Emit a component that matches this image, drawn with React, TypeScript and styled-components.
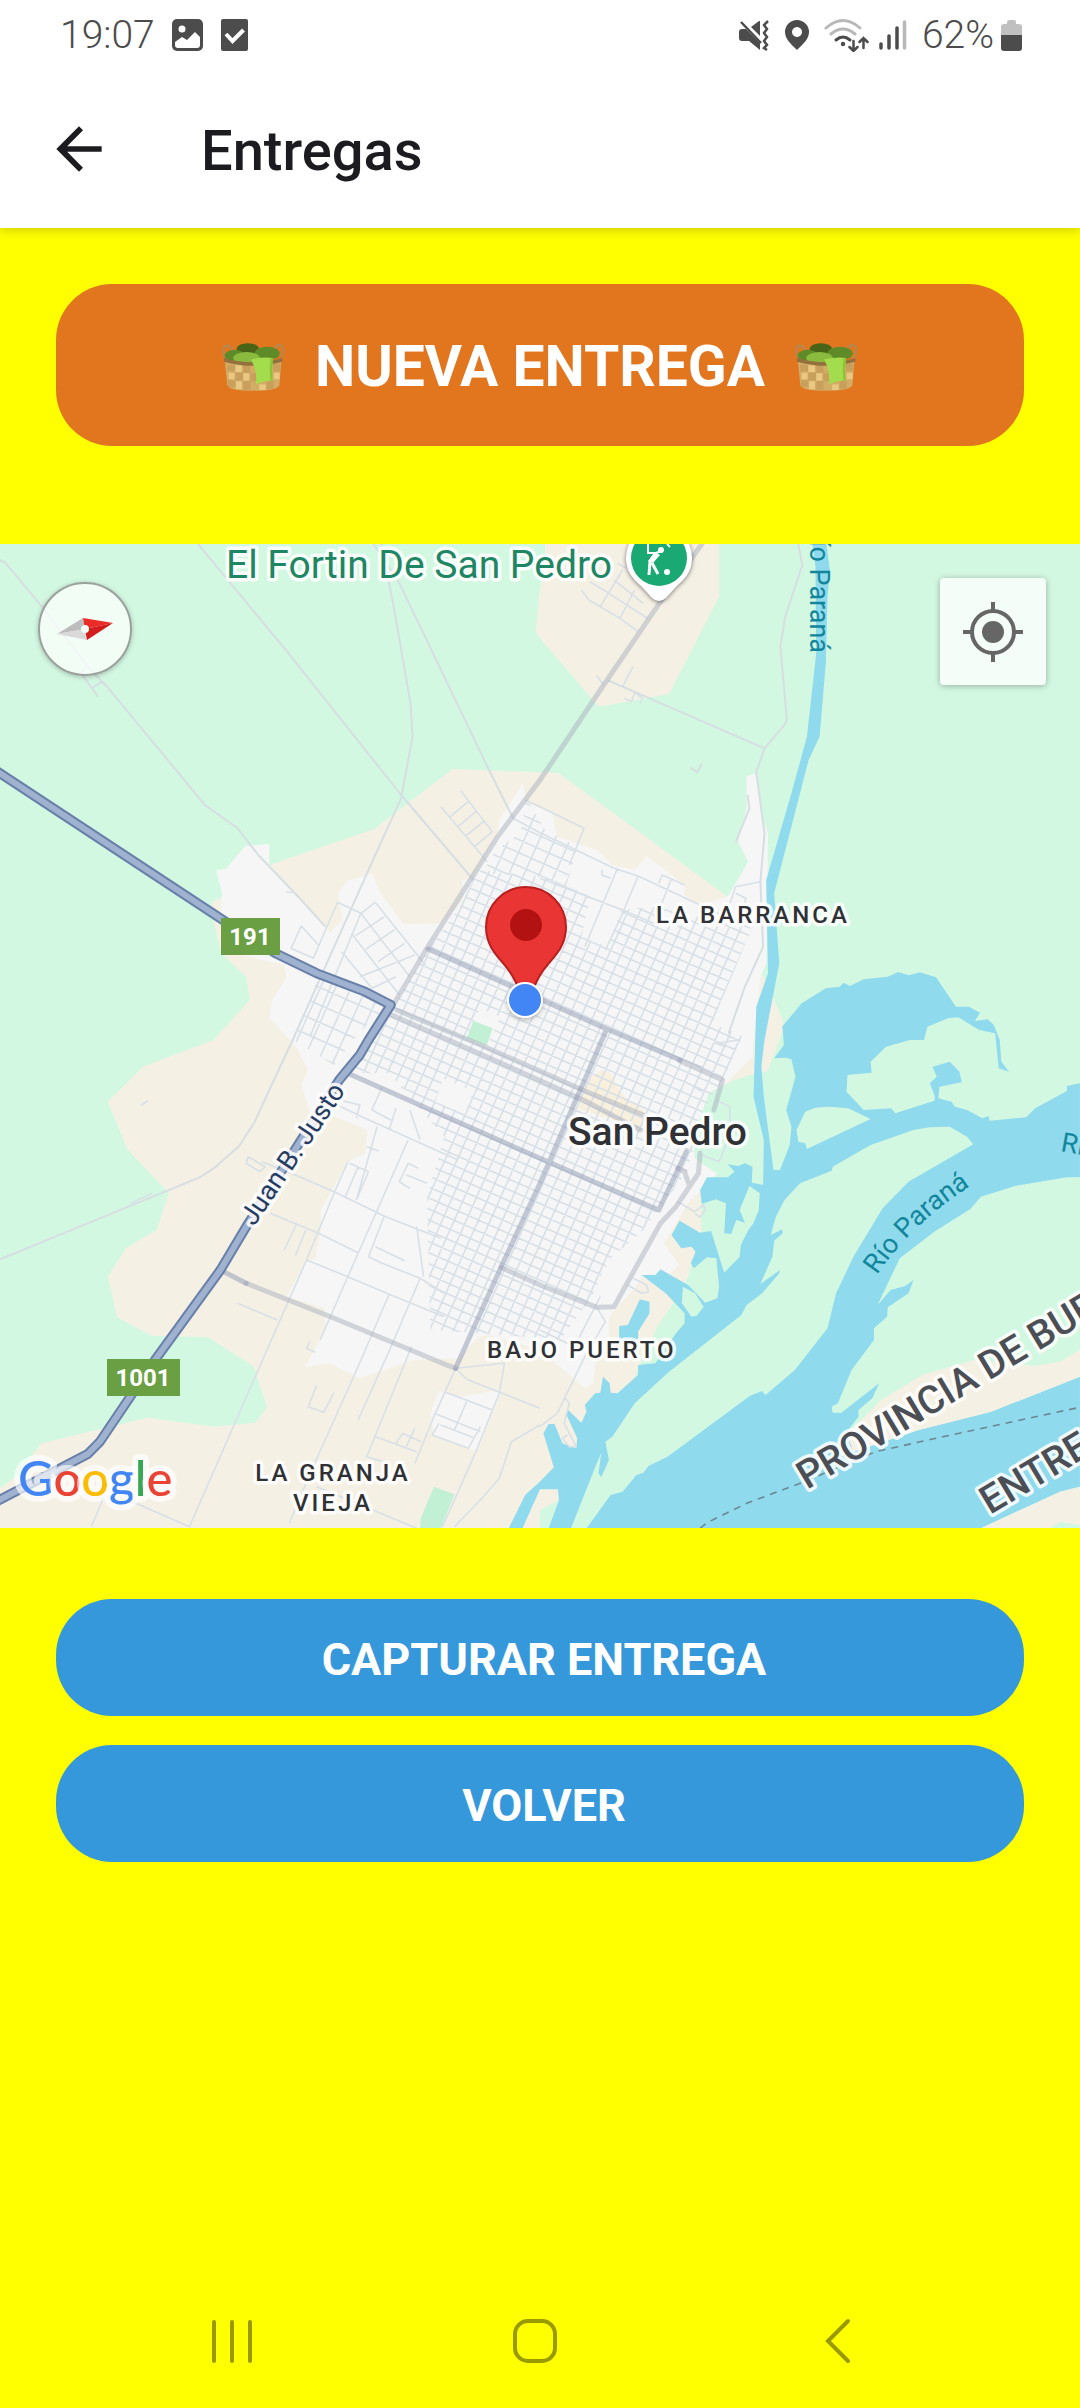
import React from "react";
import styled, { createGlobalStyle } from "styled-components";

const GlobalStyle = createGlobalStyle`
  *, *::before, *::after { box-sizing: border-box; }
  body { margin: 0; background: #ffff00; }
  button { font: inherit; border: 0; padding: 0; cursor: pointer; }
`;

const Screen = styled.div`
  display: flex;
  flex-direction: column;
  min-height: 100vh;
  background: #ffff00;
  font-family: Roboto, "Noto Sans", sans-serif;
`;

const TopBar = styled.div`
  background: #ffffff;
  box-shadow: 0 2px 10px rgba(0, 0, 0, 0.2);
`;

const StatusBar = styled.div`
  display: flex;
  align-items: center;
  justify-content: space-between;
  height: 70px;
  padding: 0 58px 0 60px;
  color: #4c4c4c;
  font-size: 39px;
  line-height: 46px;
`;

const StatusGroup = styled.div<{ $gap: number }>`
  display: flex;
  align-items: center;
  gap: ${(p) => p.$gap}px;
`;

const StatusIcon = styled.svg`
  display: block;
  flex: none;
  height: 34px;
`;

const StatusText = styled.span`
  font-weight: 350;
`;

const Header = styled.header`
  display: flex;
  align-items: center;
  gap: 88px;
  height: 158px;
  padding: 0 45px;
`;

const BackButton = styled.button`
  display: flex;
  width: 68px;
  height: 68px;
  background: none;
  color: #1c1b1f;
`;

const Title = styled.h1`
  margin: 0;
  padding-top: 4px;
  color: #1c1b1f;
  font-size: 56px;
  line-height: 64px;
  font-weight: 500;
`;

const Main = styled.main`
  display: flex;
  flex-direction: column;
  padding-top: 56px;
`;

const PrimaryButton = styled.button`
  display: flex;
  align-items: center;
  justify-content: center;
  gap: 30px;
  height: 162px;
  margin: 0 56px 98px;
  padding-top: 4px;
  border-radius: 56px;
  background: #e2761f;
  color: #ffffff;
  font-size: 57px;
  line-height: 68px;
  font-weight: 700;
`;

const Actions = styled.div`
  display: flex;
  flex-direction: column;
  gap: 29px;
  padding: 71px 56px;
`;

const ActionButton = styled.button`
  height: 117px;
  padding: 4px 0 0 8px;
  border-radius: 56px;
  background: #3598db;
  color: #ffffff;
  font-size: 45px;
  line-height: 54px;
  font-weight: 700;
`;

const MapFrame = styled.section`
  position: relative;
  overflow: hidden;
`;

const MapCanvas = styled.svg`
  display: block;
  width: 100%;
  height: auto;
`;

const CompassButton = styled.button`
  position: absolute;
  top: 38px;
  left: 38px;
  width: 94px;
  height: 94px;
  border: 2px solid #9aa09b;
  border-radius: 50%;
  background: rgba(255, 255, 255, 0.7);
  box-shadow: 0 1px 5px rgba(0, 0, 0, 0.25);
`;

const LocateButton = styled.button`
  position: absolute;
  top: 34px;
  right: 34px;
  display: grid;
  place-items: center;
  width: 106px;
  height: 107px;
  border-radius: 4px;
  background: rgba(255, 255, 255, 0.75);
  box-shadow: 0 1px 6px rgba(0, 0, 0, 0.3);
`;

const NavBar = styled.nav`
  display: grid;
  grid-template-columns: repeat(3, 1fr);
  height: 134px;
  margin-top: auto;
  padding: 0 90px 0 80px;
`;

const NavButton = styled.button`
  display: grid;
  place-items: center;
  background: none;
  color: #999900;
`;

/* ---------- map geometry ---------- */

/* Map data is stored per survey sheet; each sheet has its own origin and scale. */
const SHEETS: Record<string, [number, number, number, number]> = {
  nw: [0, 540, 1 / 2.904, 1 / 3],
  ne: [540, 540, 1 / 2.904, 1 / 3],
  sw: [0, 1030, 1 / 2.904, 1 / 3],
  se: [540, 1030, 1 / 2.904, 1 / 3],
  c: [300, 780, 1 / 3, 1 / 3],
};

function trace(data: string, closed = false): string {
  let sheet = SHEETS.nw;
  const points: string[] = [];
  data
    .trim()
    .split(/\s+/)
    .forEach((token) => {
      if (SHEETS[token]) {
        sheet = SHEETS[token];
        return;
      }
      const [x, y] = token.split(",").map(Number);
      points.push(`${(sheet[0] + x * sheet[2]).toFixed(1)},${(sheet[1] + y * sheet[3]).toFixed(1)}`);
    });
  return "M" + points.join("L") + (closed ? "Z" : "");
}

const area = (data: string) => trace(data, true);
const lines = (list: string[]) => list.map((d) => trace(d)).join("");

const GRASS = "#d3f8e2";
const SAND = "#f5f0e4";
const URBAN = "#f6f6f6";
const WATER = "#90daee";
const STREET = "#d8e0e7";

const sand = [
  "nw 1568,697 1315,687 1087,867 782,975 630,1080 615,1086 622,1150 642,1240 715,1310 725,1380 620,1500 sw 620,30 415,110 313,215 370,358 490,490 455,600 365,655 313,740 340,862 440,917 605,922 738,1010 775,1132 742,1178 622,1190 430,1163 120,1240 100,1265 60,1330 0,1375 0,1530 1568,1530 se 60,1530 60,1400 200,1180 280,1030 340,890 420,770 430,740 470,600 470,470 515,430 600,138 660,125 705,0 ne 705,1440 670,1360 640,1290 650,1270 545,1070 525,1055 55,700 15,695 0,697",
  "ne 15,0 15,60 0,150 nw 1555,275 ne 0,295 170,500 375,462 520,170 520,0",
];

const urban = [
  "nw 712,918 782,912 782,975 945,1160 958,1178 995,1140 980,1060 1010,1022 1080,1000 1105,1060 1172,1153 1285,1150 1345,1080 1342,1020 1375,1015 1445,880 1450,840 1518,730 1530,790 1568,805 ne 35,820 50,890 165,930 210,975 275,990 310,948 420,1035 418,1065 465,1095 545,1070 605,965 575,905 590,850 600,800 600,710 625,700 640,810 662,880 658,1270 640,1310 620,1500 se 617,80 540,160 490,190 455,300 450,385 515,432 470,480 430,520 360,640 403,705 375,735 300,735 270,780 200,860 200,930 160,1000 155,1060 130,1075 70,1020 0,960 sw 1420,915 1390,920 1330,985 1200,990 1045,1045 955,1000 885,1012 945,900 942,835 832,800 890,690 915,690 932,600 932,540 1010,395 1060,370 1068,300 960,255 905,260 875,165 895,120 860,50 815,0 nw 840,1500 783,1435 790,1380 832,1310 825,1275 700,1245 640,1135 645,1060 628,990 655,988",
  "sw 1275,1083 1340,1100 1430,1083 1455,1090 1385,1265 1260,1215 1250,1150",
];

const coast = "se 655,125 600,138 565,150 490,190 445,320 450,385 515,432 470,470 468,600 500,700 430,740 385,830 345,910 295,1005 420,960 540,750 700,400 700,125";

const narrowRiver = "ne 790,0 800,80 802,340 775,590 730,760 657,1020 662,1300 628,1400 625,1500 se 620,200 650,330 648,475 678,475 678,420 650,200 643,110 ne 652,1500 695,1270 680,1060 780,660 812,590 830,370 835,170 842,90 830,0";

const delta = "ne 703,1460 760,1390 830,1345 870,1340 882,1328 900,1338 940,1318 1010,1310 1040,1296 1072,1306 1103,1297 1150,1312 1208,1400 1245,1400 1278,1418 1263,1443 1300,1438 1318,1455 1335,1500 se 1340,95 1362,125 1332,115 1322,10 1275,0 ne 1215,1432 1185,1435 1125,1460 1115,1500 se 1115,30 1075,30 1005,50 960,95 963,128 893,135 890,185 940,240 1020,235 1032,250 1145,212 1147,200 1132,160 1152,140 1140,110 1190,95 1218,125 1225,157 1160,170 1157,205 1195,215 1205,230 1240,240 1285,265 1303,258 1306,272 1412,262 1438,235 1530,183 1530,168 1568,160 1568,442 1530,442 1380,468 1280,500 1250,537 1145,605 1045,685 980,825 1018,780 1060,768 1085,750 1070,790 1010,832 1008,860 970,895 970,930 905,1020 865,1120 847,1130 850,1148 875,1148 985,1060 965,1105 925,1140 925,1160 895,1200 910,1265 1100,1200 1310,1145 1568,1040 1568,1370 1510,1385 1280,1495 1280,1530 25,1530 25,1490 55,1410 52,1378 0,1378 sw 1515,1500 1475,1500 1525,1395 1568,1355 se 40,1312 10,1210 25,1182 42,1182 65,1240 105,1255 108,1225 75,1150 82,1140 120,1178 135,1145 130,1125 160,1090 175,1088 183,1040 202,1060 205,1088 225,1090 285,1035 285,1005 335,1000 395,910 420,880 420,850 365,790 295,735 335,735 350,718 430,765 480,818 515,805 520,770 512,685 485,682 447,715 438,700 452,665 440,650 410,655 382,615 405,572 465,608 497,603 535,728 580,680 583,645 605,600 620,580 635,540 638,490 608,468 580,540 595,578 570,570 555,612 535,610 540,520 510,508 470,522 465,480 485,442 545,442 565,425 545,403 575,408 595,400 617,410 615,458 650,465 678,420 697,420 725,345 730,290 715,240 742,140 730,88 715,83 680,85 708,45 705,0";

const islands = [
  "se 135,1495 205,1395 240,1385 280,1335 300,1328 315,1308 370,1280 610,1097 645,1083 655,1095 740,1020 835,895 860,790 910,680 995,535 1070,455 1258,343 1240,320 1190,290 1130,292 1085,300 960,345 850,410 847,422 755,460 710,510 685,560 670,615 703,598 705,610 680,632 675,680 640,762 697,720 695,730 645,790 600,825 585,855 375,1025 275,1120 210,1220 190,1235 200,1290 178,1342 170,1330 178,1268 165,1300 90,1495",
  "se 745,300 770,245 800,233 840,230 895,235 960,267 775,357 770,340 750,335",
  "se 415,770 412,820 440,860 455,857 475,830 450,790",
  "se 0,1440 55,1410 25,1495 0,1495",
];

const farShore = [
  "se 892,1215 990,1110 1110,1035 1260,990 1435,1008 1510,995 1568,960 1568,1040 1310,1145 1100,1200 910,1265",
  "se 1568,1370 1510,1385 1280,1495 1290,1530 1568,1530",
];

const districts = [
  {
    id: "centre",
    shape: "c 385,507 280,680 150,880 sw 1130,130 1290,320 1240,500 1250,900 1400,910 se 60,930 150,800 200,690 300,600 430,420 470,250 530,150 590,20 ne 500,1450 615,1165 330,1100 230,1110 130,1060 0,1010 nw 1390,990 1330,1110",
    across: 11,
    down: 10,
  },
  { id: "north", shape: "nw 1440,930 1510,880 1530,780 ne 15,870 110,920 75,1040 0,1010 nw 1400,1000", across: 14, down: 12 },
  { id: "west", shape: "nw 1125,1400 925,1310 850,1500 sw 860,35 970,105 1050,0", across: 14, down: 16 },
];

/* Blocks that interrupt the regular street pattern. */
const openBlocks = [
  "c 430,895 520,933 495,1000 405,965",
  "c 540,685 600,710 560,800 505,770",
  "ne 150,1060 240,1100 195,1220 120,1190",
  "sw 1060,270 1180,330 1150,440 1240,480 1215,590 1110,560",
];

const minorStreets = [
  "nw 1338,752 1430,875 1378,920",
  "nw 1280,800 1415,965",
  "nw 1360,785 1307,830",
  "nw 1385,812 1330,860",
  "nw 1407,843 1352,888",
  "nw 980,1087 1048,1120 1190,1310",
  "nw 1090,1087 1235,1275",
  "nw 1048,1120 1090,1087",
  "nw 1033,1187 1117,1130",
  "nw 1062,1228 1147,1168",
  "nw 1098,1265 1175,1210",
  "nw 1045,1310 1205,1245",
  "nw 1020,1180 1160,1365",
  "nw 992,1235 1080,1345 1150,1310",
  "nw 1048,1120 900,1490",
  "nw 980,1087 910,1255 845,1225 875,1158 925,1215",
  "nw 830,1055 850,1058",
  "ne 240,90 175,200",
  "ne 275,150 232,235",
  "ne 120,150 142,180 175,200 232,235 285,275",
  "ne 145,125 200,160 315,237",
  "ne 215,120 300,190",
  "ne 225,70 250,85",
  "ne 165,407 185,435",
  "ne 270,380 240,440",
  "ne 245,475 265,485 275,458 298,475 290,490",
  "ne 0,800 128,865 85,975",
  "nw 1490,835 ne 0,878 215,985 285,1008 465,1095 610,1165",
  "nw 1525,780 ne 0,800",
  "ne 640,1025 568,1040 545,1110",
  "ne 568,1060 598,1075 590,1110",
  "ne 225,985 130,1220",
  "ne 285,1008 240,1120 190,1230",
  "ne 0,1015 240,1110 330,1150",
  "ne 345,1030 355,1005 420,1035",
  "ne 380,1020 350,1100",
  "ne 180,990 180,1005 205,1015",
  "sw 960,215 1060,265 1330,390",
  "sw 985,210 1045,225 1035,265",
  "sw 1110,170 1080,240 1135,270",
  "sw 1150,235 1130,300",
  "sw 1190,240 1220,330",
  "sw 1065,350 1100,363",
  "sw 1095,290 1035,510",
  "sw 1185,330 1130,460 1010,740 930,930",
  "sw 1010,395 970,490 890,690 550,1490",
  "sw 1015,400 1070,425 1035,510",
  "sw 1040,410 1003,500",
  "sw 760,395 870,440 970,485 1120,560 1280,625",
  "sw 720,380 770,410 755,425 715,400 720,380",
  "sw 785,550 925,610 1040,668",
  "sw 860,585 825,660",
  "sw 888,600 858,677",
  "sw 890,690 1010,740 1130,793 1290,860",
  "sw 1185,400 1160,455 1190,475",
  "sw 1185,400 1215,415",
  "sw 1180,435 1240,460",
  "sw 1130,793 1040,1010 905,1320 840,1480",
  "sw 1290,790 1220,745 1110,700 1070,680 1115,560",
  "sw 1090,650 1175,692",
  "sw 1220,745 1140,940 1040,1170",
  "sw 1230,740 1210,590",
  "sw 690,820 805,870",
  "sw 900,935 890,955 915,967",
  "sw 920,1065 895,1130 940,1147 970,1088",
  "sw 1195,950 1065,1280 1130,1300",
  "sw 1323,1015 1260,1160 1205,1300",
  "sw 1290,1085 1430,1140",
  "sw 1260,1150 1395,1205",
  "sw 1355,1115 1320,1200",
  "sw 1395,1190 1360,1255 1255,1215 1275,1180",
  "sw 1280,1185 1380,1225",
  "sw 1323,1015 1355,1048 1568,1135",
  "sw 1323,1015 1465,1000 1450,1090 1380,1270 1285,1490",
  "sw 1568,1185 1485,1235 1450,1345 1400,1405 1320,1490",
  "sw 385,1415 550,1490",
  "sw 920,1370 1210,1495",
  "sw 265,1490 300,1405",
  "sw 1090,1220 1210,1265",
  "sw 1150,1240 1170,1210 1222,1235",
  "sw 1180,1250 1205,1195",
  "sw 410,225 430,212",
  "sw 380,520 442,490",
  "se 510,210 552,230 550,320 520,395 470,375",
  "se 440,165 470,185",
  "se 400,515 450,545 475,525 480,540 465,562 450,550",
  "se 270,745 310,765 315,785 295,790 255,765",
  "se 165,832 190,875 130,980 50,1150 0,1190",
  "se 70,1100 85,1120 70,1180 105,1250 85,1250 65,1225 80,1215",
  "se 0,900 100,950 175,800",
  "se 580,30 510,40 540,50",
];

const ruralRoads = [
  "nw 0,60 15,68 122,200 255,380 315,445 595,795 690,865 750,945 875,1080 945,1160",
  "nw 575,12 830,330 1165,765 1375,1020",
  "nw 1107,12 1130,130 1145,210 1192,490 1198,590 1165,775 1105,910 990,1175 850,1500 sw 782,180 740,275 695,347 625,412 580,442 495,478 0,688",
  "nw 1085,12 1160,130 1420,690 1490,835",
  "nw 235,400 285,470",
  "nw 235,400 250,380",
  "nw 265,445 297,425",
  "ne 750,12 762,75 712,230 698,320 717,540 712,552 652,625 628,695 652,880 640,1025 648,1220 595,1340 548,1480",
  "ne 195,420 285,460 652,625",
  "ne 437,683 457,697 470,670",
  "ne 603,765 608,805 568,907",
];

const avenues = [
  "c 290,690 530,790 860,935 1030,1005",
  "c 275,705 560,830 850,960 1020,1050",
  "c 1140,840 1200,865 se 405,92 530,150 505,240",
  "se 465,370 460,430 395,530 350,580 215,830 165,832 0,765 sw 1455,712",
  "se 400,415 420,425 435,470",
  "sw 715,760 960,860 1285,1000 1323,1015",
  "ne 470,12 350,185 185,435 0,720 nw 1445,890 1240,1225 1145,1390",
];

const mainAvenues = [
  "c 385,507 920,747 1140,840",
  "c 920,747 850,910 se 100,220 0,460 sw 1455,712 1375,895 1323,1015",
  "sw 1010,130 se 0,385 345,540 425,365",
  "sw 640,720 715,760",
];

const highways = lines([
  "nw -20,686 655,1145 800,1240 920,1300 1060,1355 1135,1395 1070,1500 sw 1045,75 985,150 715,590 640,720 450,990 290,1235 255,1272 -20,1420",
]);

const halo = { stroke: "#ffffff", strokeWidth: 7, strokeOpacity: 0.85, strokeLinejoin: "round", paintOrder: "stroke" } as const;

const MapLabel = styled.text<{ $size: number; $color: string; $weight?: number; $tracking?: number }>`
  font-family: Roboto, "Noto Sans", sans-serif;
  font-size: ${(p) => p.$size}px;
  font-weight: ${(p) => p.$weight ?? 400};
  letter-spacing: ${(p) => p.$tracking ?? 0}px;
  fill: ${(p) => p.$color};
`;

const LogoText = styled.text`
  font-family: Lato, "Open Sans", sans-serif;
  font-size: 49px;
  font-weight: 500;
`;

function StreetGrid() {
  const step = (from: number, to: number, by: number) => {
    const out: number[] = [];
    for (let v = from; v < to; v += by) out.push(v);
    return out;
  };
  return (
    <>
      {districts.map((d) => (
        <g key={d.id} clipPath={`url(#district-${d.id})`}>
          <clipPath id={`district-${d.id}`}>
            <path d={area(d.shape)} />
          </clipPath>
          <path
            transform="translate(525 1000) rotate(24)"
            d={
              step(-360, 360, d.across).map((x) => `M${x},-360V400`).join("") +
              step(-360, 400, d.down).map((y) => `M-360,${y}H360`).join("")
            }
            stroke={STREET}
            strokeWidth={1.6}
            fill="none"
          />
        </g>
      ))}
    </>
  );
}

function CityMap() {
  return (
    <MapCanvas viewBox="0 544 1080 984" role="img" aria-label="Mapa de San Pedro">
      <rect x="0" y="544" width="1080" height="984" fill={GRASS} />
      {sand.map((d) => <path key={d} d={area(d)} fill={SAND} />)}
      {urban.map((d) => <path key={d} d={area(d)} fill={URBAN} />)}
      <path d={area(coast)} fill={GRASS} />
      <path d={area("se 180,120 205,130 230,180 250,205 300,240 305,310 200,265 105,235 150,140")} fill="#f8f0dc" />
      <StreetGrid />
      {openBlocks.map((d) => <path key={d} d={area(d)} fill={URBAN} />)}
      <path d={area("c 520,722 578,745 560,797 500,775")} fill="#c2f0d5" />
      <path d={area("sw 1260,1370 1320,1393 1280,1495 1220,1495 1222,1465")} fill="#c2f0d5" />
      <path d={area(narrowRiver)} fill={WATER} />
      <path d={area(delta)} fill={WATER} />
      <path d={area("se 290,808 318,815 318,850 285,905 285,935 230,935 230,888 255,885")} fill={WATER} />
      {islands.map((d) => <path key={d} d={area(d)} fill={GRASS} />)}
      {farShore.map((d) => <path key={d} d={area(d)} fill={SAND} />)}
      <path d={area("se 1480,1495 1510,1475 1568,1485 1568,1500")} fill={GRASS} />

      <g fill="none" strokeLinejoin="round">
        <path d={lines(minorStreets)} stroke={STREET} strokeWidth={1.6} />
        <path d={lines(ruralRoads)} stroke="#d6dee2" strokeWidth={2} />
        <g strokeOpacity={0.5} strokeLinecap="round">
          <path d={lines(avenues)} stroke="#aab0be" strokeWidth={5} />
          <path d={lines(mainAvenues)} stroke="#8d98b2" strokeWidth={5} />
        </g>
        <path d={highways} stroke="#6880a9" strokeWidth={10} />
        <path d={highways} stroke="#9fb2cf" strokeWidth={6} />
        <path
          d={trace("se 465,1495 485,1478 600,1420 760,1358 975,1265 1170,1220 1568,1132")}
          stroke="#6c8791"
          strokeWidth={1.6}
          strokeDasharray="7 6"
        />
      </g>

      <g {...halo}>
        <MapLabel x={226} y={578} $size={39} $color="#1f8664">El Fortin De San Pedro</MapLabel>
        <MapLabel x={656} y={923} $size={24} $weight={500} $tracking={3} $color="#2f3134">LA BARRANCA</MapLabel>
        <MapLabel x={568} y={1145} $size={39} $weight={500} $color="#2f3134">San Pedro</MapLabel>
        <MapLabel x={487} y={1358} $size={24} $weight={500} $tracking={3} $color="#2f3134">BAJO PUERTO</MapLabel>
        <MapLabel x={333} y={1481} textAnchor="middle" $size={24} $weight={500} $tracking={3} $color="#2f3134">LA GRANJA</MapLabel>
        <MapLabel x={333} y={1511} textAnchor="middle" $size={24} $weight={500} $tracking={3} $color="#2f3134">VIEJA</MapLabel>
        <MapLabel transform="translate(254 1227) rotate(-56)" $size={27} $color="#263c60">Juan B. Justo</MapLabel>
        <MapLabel transform="translate(807 1490) rotate(-31)" $size={39} $weight={500} $color="#4b4f55">PROVINCIA DE BUENOS AIRES</MapLabel>
        <MapLabel transform="translate(990 1515) rotate(-31)" $size={39} $weight={500} $color="#4b4f55">ENTRE RÍOS</MapLabel>
      </g>
      <path id="river-label" d="M877,1275Q913,1222 975,1183" fill="none" />
      <MapLabel $size={27} $color="#12869a">
        <textPath href="#river-label">Río Paraná</textPath>
      </MapLabel>
      <MapLabel transform="translate(810 653) rotate(90)" textAnchor="end" $size={27} $color="#12869a">Río Paraná</MapLabel>
      <MapLabel transform="translate(1060 1151) rotate(10)" $size={27} $color="#12869a">Río Paraná</MapLabel>

      <rect x={221} y={918} width={59} height={37} fill="#6b9f43" />
      <MapLabel x={250} y={945} textAnchor="middle" $size={24} $weight={700} $color="#ffffff">191</MapLabel>
      <rect x={107} y={1359} width={73} height={37} fill="#6b9f43" />
      <MapLabel x={143} y={1386} textAnchor="middle" $size={24} $weight={700} $color="#ffffff">1001</MapLabel>

      <LogoText x={18} y={1496} stroke="#ffffff" strokeWidth={12} strokeOpacity={0.65} strokeLinejoin="round" paintOrder="stroke">
        <tspan fill="#4285f4">G</tspan>
        <tspan fill="#ea4335">o</tspan>
        <tspan fill="#fbbc05">o</tspan>
        <tspan fill="#4285f4">g</tspan>
        <tspan fill="#34a853">l</tspan>
        <tspan fill="#ea4335">e</tspan>
      </LogoText>

      <g filter="drop-shadow(0 1px 2px rgba(0,0,0,0.5))">
        <path d="M659,525a33,33 0 0 1 33,33c0,16 -10,23 -17,30l-9,10q-7,6 -14,0l-9,-10c-7,-7 -17,-14 -17,-30a33,33 0 0 1 33,-33Z" fill="#ffffff" />
      </g>
      <circle cx="659" cy="558" r="28" fill="#1aa873" />
      <g stroke="#ffffff" fill="none" strokeWidth="3">
        <path d="M648,544v9h8l5,-2M667,544l3,3" strokeWidth="2" />
        <path d="M656,553l-6,8l-1,14M652,563l6,11" />
      </g>
      <path d="M655,552l-7,9l5,2l7,-8Z" fill="#ffffff" />
      <circle cx="661" cy="550" r="3" fill="#ffffff" />
      <circle cx="667" cy="572" r="3" fill="#ffffff" />

      <path
        d="M526,887a40,40 0 0 1 40,40c0,16 -8,26 -17,36c-7,8 -13,17 -17,30h-12c-4,-13 -10,-22 -17,-30c-9,-10 -17,-20 -17,-36a40,40 0 0 1 40,-40Z"
        fill="#ea3535"
        stroke="#b81f1f"
        strokeWidth="2"
      />
      <circle cx="526" cy="925" r="16" fill="#b31212" />
      <g filter="drop-shadow(0 2px 2px rgba(0,0,0,0.25))">
        <circle cx="525" cy="1000" r="18" fill="#ffffff" />
      </g>
      <circle cx="525" cy="1000" r="16" fill="#4285f4" />
    </MapCanvas>
  );
}

function Basket() {
  return (
    <svg width="63" height="50" viewBox="24 38 190 150" aria-hidden="true">
      <g fill="none" stroke="#b08a52" strokeWidth="6">
        <path d="M36,92C24,72 26,50 38,48C48,47 54,58 58,68" />
        <path d="M200,92C212,72 210,48 198,46C188,46 184,54 180,62" />
      </g>
      <ellipse cx="102" cy="59" rx="34" ry="18" fill="#4a6417" />
      <ellipse cx="62" cy="78" rx="30" ry="17" fill="#5f8a28" />
      <ellipse cx="160" cy="72" rx="38" ry="20" fill="#5f8a28" />
      <ellipse cx="98" cy="86" rx="40" ry="18" fill="#8abb3e" />
      <path d="M32,88Q118,112 204,88L197,168Q190,185 118,185T40,168Z" fill="#d3ac66" />
      <path
        d="M40,106h24v20h-24ZM88,108h22v22h-22ZM64,130h24v24h-24ZM178,104h22v22h-22ZM42,154h22v20h-22ZM88,156h22v26h-22ZM110,132h20v24h-20ZM158,156h22v24h-22Z"
        fill="#b98b4a"
        opacity="0.4"
      />
      <path
        d="M64,108h20v20h-20ZM44,130h18v20h-18ZM88,132h18v22h-18ZM66,156h18v24h-18ZM180,130h18v20h-18ZM136,166h20v16h-20Z"
        fill="#efcf8b"
        opacity="0.8"
      />
      <path d="M30,86Q118,112 206,86V97Q118,122 30,97Z" fill="#94703c" />
      <path d="M112,90Q150,82 178,86Q172,120 176,154Q150,154 126,166Q132,130 112,90Z" fill="#a3dc4c" />
      <path d="M170,87h8q-5,34 -2,67l-6,1q-4,-34 0,-68Z" fill="#8cc436" />
    </svg>
  );
}

function LeftStatus() {
  return (
    <StatusGroup $gap={17}>
      <StatusText>19:07</StatusText>
      <StatusIcon width="32" viewBox="0 0 32 34" aria-hidden="true">
        <rect x="0" y="1" width="31" height="32" rx="5" fill="#4c4c4c" />
        <circle cx="10" cy="11" r="3.5" fill="#fff" />
        <path d="M3,24l7,-5l5,3l8,-8l5,5v8q0,3 -3,3h-19q-3,0 -3,-3Z" fill="#fff" />
      </StatusIcon>
      <StatusIcon width="27" viewBox="0 0 27 34" aria-hidden="true">
        <rect x="0" y="1" width="27" height="32" rx="2" fill="#4c4c4c" />
        <path d="M5,16l6.500,7l11,-11" fill="none" stroke="#fff" strokeWidth="4" />
      </StatusIcon>
    </StatusGroup>
  );
}

function RightStatus() {
  return (
    <StatusGroup $gap={15}>
      <StatusIcon width="31" viewBox="0 0 31 34" aria-hidden="true">
        <g fill="#4c4c4c">
          <path d="M0,14q0,-3 3,-3h4l14,14v7l-11,-9h-7q-3,0 -3,-3Z" />
          <path d="M12,9l8,-6h1v15Z" />
        </g>
        <path d="M2,4l20,21" stroke="#4c4c4c" strokeWidth="2.500" />
        <path d="M29,3l-4,4l3,4l-3,4l3,4l-3,4l3,4l-3,3l3,2" fill="none" stroke="#4c4c4c" strokeWidth="2.500" />
      </StatusIcon>
      <StatusIcon width="24" viewBox="0 0 24 34" aria-hidden="true">
        <path d="M12,2a12,12 0 0 1 12,12c0,7 -6,12 -12,18c-6,-6 -12,-11 -12,-18a12,12 0 0 1 12,-12Zm0,7a5,5 0 1 0 .01,0Z" fill="#4c4c4c" fillRule="evenodd" />
      </StatusIcon>
      <StatusGroup $gap={10}>
        <StatusIcon width="45" viewBox="0 0 45 34" aria-hidden="true">
          <g fill="none" strokeWidth="3" strokeLinecap="round">
            <path d="M2,10q17,-15 34,0M7,16q12,-10 24,0" stroke="#b8b8b8" />
            <path d="M12,22q7,-6 14,0" stroke="#4c4c4c" />
            <path d="M29.500,23v10m-4,-4l4,4l4,-4M39.500,30v-10m-4,4l4,-4l4,4" stroke="#4c4c4c" strokeWidth="2.500" />
          </g>
          <circle cx="19" cy="26" r="2.200" fill="#4c4c4c" />
        </StatusIcon>
        <StatusIcon width="28" viewBox="0 0 28 34" aria-hidden="true">
          <g strokeWidth="3.500" strokeLinecap="round" stroke="#4c4c4c">
            <path d="M2,26v4M10,18v12M18,10v20" />
            <path d="M25.500,4v26" stroke="#b8b8b8" />
          </g>
        </StatusIcon>
      </StatusGroup>
      <StatusGroup $gap={7}>
        <StatusText>62%</StatusText>
        <StatusIcon width="21" viewBox="0 0 21 34" aria-hidden="true">
          <path d="M0,17v-8q0,-3 3,-3h3v-2q0,-2 2,-2h5q2,0 2,2v2h3q3,0 3,3v8Z" fill="#c0c0c0" />
          <path d="M0,17h21v13q0,3 -3,3h-15q-3,0 -3,-3Z" fill="#4c4c4c" />
        </StatusIcon>
      </StatusGroup>
    </StatusGroup>
  );
}

export default function App() {
  return (
    <Screen>
      <GlobalStyle />
      <TopBar>
        <StatusBar>
          <LeftStatus />
          <RightStatus />
        </StatusBar>
        <Header>
          <BackButton type="button" aria-label="Atrás">
            <svg width="68" height="68" viewBox="0 0 24 24" fill="currentColor" aria-hidden="true">
              <path d="M20 11H7.830l5.590-5.590L12 4l-8 8 8 8 1.410-1.410L7.830 13H20v-2z" />
            </svg>
          </BackButton>
          <Title>Entregas</Title>
        </Header>
      </TopBar>
      <Main>
        <PrimaryButton type="button">
          <Basket />
          <span>NUEVA ENTREGA</span>
          <Basket />
        </PrimaryButton>
        <MapFrame>
          <CityMap />
          <CompassButton type="button" aria-label="Orientar al norte">
            <svg width="90" height="90" viewBox="0 0 90 90" aria-hidden="true">
              <path d="M17,50L43,34L45,45Z" fill="#bdbdbd" />
              <path d="M17,50L45,45L47,56Z" fill="#d9d9d9" />
              <path d="M43,34L73,39L45,45Z" fill="#ea2c28" />
              <path d="M73,39L47,56L45,45Z" fill="#d31c1c" />
              <circle cx="45" cy="45" r="4" fill="#f3fdf7" />
            </svg>
          </CompassButton>
          <LocateButton type="button" aria-label="Mi ubicación">
            <svg width="60" height="60" viewBox="0 0 60 60" aria-hidden="true">
              <circle cx="30" cy="30" r="21" fill="none" stroke="#666" strokeWidth="4" />
              <circle cx="30" cy="30" r="11" fill="#666" />
              <path d="M30,0v9M30,51v9M0,30h9M51,30h9" stroke="#666" strokeWidth="4" />
            </svg>
          </LocateButton>
        </MapFrame>
        <Actions>
          <ActionButton type="button">CAPTURAR ENTREGA</ActionButton>
          <ActionButton type="button">VOLVER</ActionButton>
        </Actions>
      </Main>
      <NavBar>
        <NavButton type="button" aria-label="Recientes">
          <svg width="40" height="44" viewBox="0 0 40 44" stroke="currentColor" strokeWidth="4" strokeLinecap="round" aria-hidden="true">
            <path d="M2,3v39M20,3v39M38,3v39" />
          </svg>
        </NavButton>
        <NavButton type="button" aria-label="Inicio">
          <svg width="44" height="44" viewBox="0 0 44 44" fill="none" stroke="currentColor" strokeWidth="4" aria-hidden="true">
            <rect x="2" y="2" width="40" height="40" rx="13" />
          </svg>
        </NavButton>
        <NavButton type="button" aria-label="Volver">
          <svg width="26" height="46" viewBox="0 0 26 46" fill="none" stroke="currentColor" strokeWidth="4" strokeLinecap="round" aria-hidden="true">
            <path d="M23,3L3,23L23,43" />
          </svg>
        </NavButton>
      </NavBar>
    </Screen>
  );
}
